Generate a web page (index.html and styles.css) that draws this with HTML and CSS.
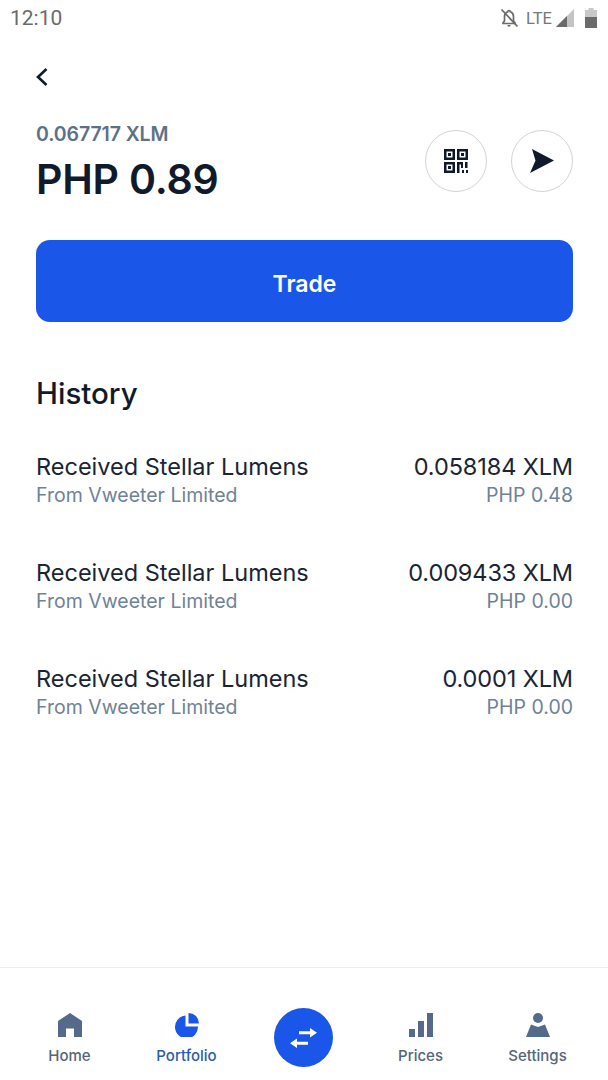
FILE: index.html
```html
<!DOCTYPE html>
<html lang="en">
<head>
    <meta charset="UTF-8">
    <meta name="viewport" content="width=device-width, initial-scale=1.0">
    <title>Stellar Lumens</title>
    <link rel="stylesheet" href="styles.css">
</head>
<body>
    <div class="screen">
        <!-- Status bar -->
        <div class="status-bar">
            <span class="clock">12:10</span>
            <div class="status-icons">
                <svg class="icon-bell" viewBox="0 0 20 20" width="20" height="20">
                    <path d="M10 2.5c-.8 0-1.3.6-1.3 1.3C6.500 4.500 5.500 6.300 5.500 8.500V13L4 14.800V15.500H16V14.800L14.500 13V8.500C14.500 6.300 13.500 4.500 11.300 3.800 11.300 3.100 10.800 2.500 10 2.500Z" fill="none" stroke="#6b6b6b" stroke-width="1.700"/>
                    <path d="M8.300 17h3.400a1.700 1.700 0 0 1-3.400 0Z" fill="#6b6b6b"/>
                    <path d="M2.500 1.500 18.500 18.500" stroke="#6b6b6b" stroke-width="1.800"/>
                </svg>
                <span class="lte">LTE</span>
                <svg class="icon-signal" viewBox="0 0 18 18" width="18" height="18">
                    <path d="M0 18 18 0V18Z" fill="#c4c4c4"/>
                    <path d="M0 18 11 7V18Z" fill="#6b6b6b"/>
                </svg>
                <svg class="icon-battery" viewBox="0 0 12 20" width="12" height="20">
                    <path d="M3.500 0h5v2H12V20H0V2H3.500Z" fill="#c8c8c8"/>
                    <path d="M0 9H12V20H0Z" fill="#6b6b6b"/>
                </svg>
            </div>
        </div>

        <!-- Header -->
        <div class="back-row">
            <svg viewBox="0 0 14 20" width="14" height="20">
                <path d="M11.500 2 3 10l8.500 8" fill="none" stroke="#101a2b" stroke-width="2.600"/>
            </svg>
        </div>

        <div class="balance-row">
            <div class="balance">
                <div class="balance-crypto">0.067717 XLM</div>
                <div class="balance-fiat">PHP 0.89</div>
            </div>
            <div class="balance-actions">
                <div class="round-btn">
                    <svg viewBox="0 0 24 24" width="24" height="24">
                        <path fill="#101a2b" fill-rule="evenodd" d="M0 0H11V11H0ZM2.500 2.500V8.500H8.500V2.500ZM4 4H7V7H4ZM13 0H24V11H13ZM15.500 2.500V8.500H21.500V2.500ZM17 4H20V7H17ZM0 13H11V24H0ZM2.500 15.500V21.500H8.500V15.500ZM4 17H7V20H4ZM13 13H19V19H17V15.500H15.500V24H13ZM21 13H23.500V19H21ZM18 21H20V24H18ZM22 21H24V24H22Z"/>
                    </svg>
                </div>
                <div class="round-btn">
                    <svg viewBox="0 0 26 24" width="26" height="24">
                        <path fill="#101a2b" d="M3 0 25 11.500 1 24 6.500 11.500Z"/>
                    </svg>
                </div>
            </div>
        </div>

        <button class="trade-btn">Trade</button>

        <!-- History -->
        <h2 class="history-title">History</h2>
        <div class="history">
            <div class="history-row">
                <div>
                    <div class="row-main">Received Stellar Lumens</div>
                    <div class="row-sub">From Vweeter Limited</div>
                </div>
                <div class="row-right">
                    <div class="row-main">0.058184 XLM</div>
                    <div class="row-sub">PHP 0.48</div>
                </div>
            </div>
            <div class="history-row">
                <div>
                    <div class="row-main">Received Stellar Lumens</div>
                    <div class="row-sub">From Vweeter Limited</div>
                </div>
                <div class="row-right">
                    <div class="row-main">0.009433 XLM</div>
                    <div class="row-sub">PHP 0.00</div>
                </div>
            </div>
            <div class="history-row">
                <div>
                    <div class="row-main">Received Stellar Lumens</div>
                    <div class="row-sub">From Vweeter Limited</div>
                </div>
                <div class="row-right">
                    <div class="row-main">0.0001 XLM</div>
                    <div class="row-sub">PHP 0.00</div>
                </div>
            </div>
        </div>

        <!-- Bottom navigation -->
        <nav class="bottom-nav">
            <div class="nav-item">
                <svg viewBox="0 0 24 24" width="24" height="24">
                    <path fill="#55698a" fill-rule="evenodd" d="M12 0 24 8V24H16V15.500H8V24H0V8Z"/>
                </svg>
                <span>Home</span>
            </div>
            <div class="nav-item active">
                <svg viewBox="0 0 24 24" width="24" height="24">
                    <path fill="#1a56e8" d="M10.500 2.500V13.500H23A11.500 11.500 0 1 1 10.500 2.500Z"/>
                    <path fill="#1a56e8" d="M13.500 0A10.500 10.500 0 0 1 24 10.500H13.500Z"/>
                </svg>
                <span>Portfolio</span>
            </div>
            <div class="nav-center">
                <div class="swap-btn">
                    <svg viewBox="0 0 27 20" width="27" height="20">
                        <path fill="#fff" d="M20 0 27 4.700 20 9.500V6.300H9V3.200H20ZM7 10.500V13.700H18V16.800H7V20L0 15.200Z"/>
                    </svg>
                </div>
            </div>
            <div class="nav-item">
                <svg viewBox="0 0 24 24" width="24" height="24">
                    <path fill="#55698a" d="M0 16H6V24H0ZM9 8H15V24H9ZM18 0H24V24H18Z"/>
                </svg>
                <span>Prices</span>
            </div>
            <div class="nav-item">
                <svg viewBox="0 0 24 24" width="24" height="24">
                    <circle cx="12" cy="5" r="5" fill="#55698a"/>
                    <path fill="#55698a" d="M5 11.500 12 14 19 11.500 24 24H0Z"/>
                </svg>
                <span>Settings</span>
            </div>
        </nav>
    </div>
</body>
</html>
```

FILE: styles.css
```css
* {
    box-sizing: border-box;
}
body {
    margin: 0;
    background: #fff;
    font-family: 'Inter', 'Liberation Sans', sans-serif;
    color: #101a2b;
}
.screen {
    width: 608px;
    height: 1080px;
    display: flex;
    flex-direction: column;
    overflow: hidden;
}
.status-bar {
    height: 36px;
    padding: 0 11px 0 10px;
    display: flex;
    align-items: center;
    justify-content: space-between;
    color: #6b6b6b;
}
.clock {
    font-family: 'Roboto', sans-serif;
    font-size: 21px;
}
.status-icons {
    display: flex;
    align-items: center;
    gap: 4px;
}
.lte {
    font-family: 'Roboto', sans-serif;
    font-size: 16.500px;
    color: #777;
    margin-left: 3px;
}
.icon-battery {
    margin-left: 7px;
}
.back-row {
    height: 30px;
    margin-top: 26px;
    padding-left: 35px;
    display: flex;
    align-items: center;
}
.balance-row {
    margin-top: 30px;
    padding: 0 35px 0 36px;
    display: flex;
    justify-content: space-between;
    align-items: flex-start;
}
.balance-crypto {
    font-size: 19.500px;
    font-weight: 600;
    color: #5d7186;
    line-height: 24px;
    letter-spacing: -0.1px;
}
.balance-fiat {
    font-size: 41px;
    font-weight: 600;
    line-height: 50px;
    margin-top: 8px;
    letter-spacing: -0.2px;
}
.balance-actions {
    display: flex;
    gap: 24px;
    margin-top: 8px;
}
.round-btn {
    width: 62px;
    height: 62px;
    border: 1.500px solid #d4d4d4;
    border-radius: 50%;
    display: flex;
    align-items: center;
    justify-content: center;
}
.trade-btn {
    display: block;
    margin: 36px 35px 0 36px;
    height: 82px;
    width: 537px;
    padding-top: 6px;
    border: none;
    border-radius: 14px;
    background: #1a56e8;
    color: #fff;
    font-family: inherit;
    font-size: 23px;
    font-weight: 600;
}
.history-title {
    margin: 51px 0 0 36px;
    font-size: 29.500px;
    font-weight: 500;
    line-height: 40px;
}
.history {
    margin-top: 39px;
    padding: 0 35px 0 36px;
    display: flex;
    flex-direction: column;
    gap: 48px;
}
.history-row {
    display: flex;
    justify-content: space-between;
    height: 58px;
}
.row-main {
    font-size: 23.500px;
    line-height: 30px;
    color: #1a2433;
}
.row-sub {
    font-size: 19.500px;
    line-height: 26px;
    color: #6f8296;
}
.row-right {
    text-align: right;
}
.row-right .row-main {
    letter-spacing: -0.1px;
}
.bottom-nav {
    margin-top: auto;
    height: 113px;
    border-top: 1px solid #efefef;
    display: flex;
    padding: 0 12px 0 11px;
}
.nav-item {
    width: 117px;
    padding-top: 45px;
    display: flex;
    flex-direction: column;
    align-items: center;
    font-size: 15px;
    font-weight: 500;
    color: #55657a;
}
.nav-item span {
    margin-top: 9px;
}
.nav-item.active {
    color: #2b5cab;
}
.nav-center {
    flex: 1;
    display: flex;
    justify-content: center;
    padding-top: 40px;
}
.swap-btn {
    width: 59px;
    height: 59px;
    border-radius: 50%;
    background: #1a56e8;
    display: flex;
    align-items: center;
    justify-content: center;
}
```
